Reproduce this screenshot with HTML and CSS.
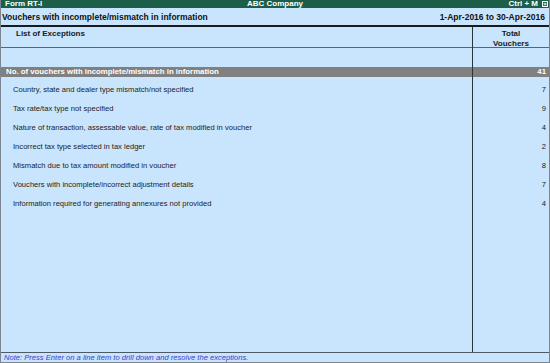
FILE: index.html
```html
<!DOCTYPE html>
<html>
<head>
  <title>Form RT-I</title>
  <link rel="stylesheet" href="styles.css">
</head>
<body>
  <div class="window">
    <div class="titlebar">
      <span class="title-left">Form RT-I</span>
      <span class="title-center">ABC Company</span>
      <span class="title-right">Ctrl + M <span class="close-box">&#215;</span></span>
    </div>

    <div class="header">
      <span class="report-name">Vouchers with incomplete/mismatch in information</span>
      <span class="period">1-Apr-2016 to 30-Apr-2016</span>
    </div>

    <div class="report">
      <div class="row col-head">
        <div class="cell-left">List of Exceptions</div>
        <div class="cell-right">Total<br>Vouchers</div>
      </div>
      <div class="row spacer">
        <div class="cell-left"></div>
        <div class="cell-right"></div>
      </div>
      <div class="row total-row">
        <div class="cell-left">No. of vouchers with incomplete/mismatch in information</div>
        <div class="cell-right">41</div>
      </div>
      <div class="row gap">
        <div class="cell-left"></div>
        <div class="cell-right"></div>
      </div>
      <div class="row item">
        <div class="cell-left">Country, state and dealer type mismatch/not specified</div>
        <div class="cell-right">7</div>
      </div>
      <div class="row item">
        <div class="cell-left">Tax rate/tax type not specified</div>
        <div class="cell-right">9</div>
      </div>
      <div class="row item">
        <div class="cell-left">Nature of transaction, assessable value, rate of tax modified in voucher</div>
        <div class="cell-right">4</div>
      </div>
      <div class="row item">
        <div class="cell-left">Incorrect tax type selected in tax ledger</div>
        <div class="cell-right">2</div>
      </div>
      <div class="row item">
        <div class="cell-left">Mismatch due to tax amount modified in voucher</div>
        <div class="cell-right">8</div>
      </div>
      <div class="row item">
        <div class="cell-left">Vouchers with incomplete/incorrect adjustment details</div>
        <div class="cell-right">7</div>
      </div>
      <div class="row item">
        <div class="cell-left">Information required for generating annexures not provided</div>
        <div class="cell-right">4</div>
      </div>
      <div class="row filler">
        <div class="cell-left"></div>
        <div class="cell-right"></div>
      </div>
    </div>

    <div class="note">Note: Press Enter on a line item to drill down and resolve the exceptions.</div>
  </div>
</body>
</html>
```

FILE: styles.css
```css
body {
  margin: 0;
  padding: 0;
  font-family: 'Liberation Sans', Arial, sans-serif;
  font-size: 8px;
  color: #1a1a1a;
  background-color: #ffffff;
}

.window {
  width: 550px;
  height: 363px;
  box-sizing: border-box;
  display: flex;
  flex-direction: column;
  background-color: #c9e5fd;
  border-left: 1px solid #7a8590;
  border-right: 1px solid #7a8590;
}

/* Title bar */
.titlebar {
  height: 8px;
  background-color: #1d5e49;
  color: #ffffff;
  font-weight: bold;
  line-height: 8px;
  display: flex;
  align-items: center;
  justify-content: space-between;
  padding: 0 1px 0 4px;
  position: relative;
}

.title-center {
  position: absolute;
  left: 0;
  right: 0;
  text-align: center;
  pointer-events: none;
}

.title-right {
  display: flex;
  align-items: center;
  gap: 4px;
}

.close-box {
  display: inline-block;
  width: 6px;
  height: 6px;
  border: 1px solid #ffffff;
  box-sizing: border-box;
  font-size: 6px;
  line-height: 4px;
  text-align: center;
}

/* Report header */
.header {
  height: 17px;
  display: flex;
  justify-content: space-between;
  align-items: center;
  padding: 0 4px 0 1px;
  font-weight: bold;
  font-size: 8.5px;
  color: #111111;
  border-bottom: 2px solid #1a1a1a;
}

/* Report grid */
.report {
  flex: 1;
  display: flex;
  flex-direction: column;
  border-bottom: 1px solid #4e5963;
}

.row {
  display: grid;
  grid-template-columns: 1fr 77px;
}

.cell-right {
  border-left: 1px solid #2e3338;
  text-align: right;
  padding-right: 3px;
}

.col-head {
  height: 20px;
  border-bottom: 1px solid #5a6570;
  font-weight: bold;
}

.col-head .cell-left {
  padding: 2px 0 0 15px;
}

.col-head .cell-right {
  text-align: center;
  padding: 2px 0 0 0;
  line-height: 10px;
}

.spacer {
  height: 19px;
}

.total-row {
  height: 10px;
  line-height: 10px;
  background-color: #808080;
  color: #ffffff;
  font-weight: bold;
  font-size: 7.8px;
}

.total-row .cell-left {
  padding-left: 5px;
}

.gap {
  height: 3px;
}

.item {
  height: 19px;
  line-height: 19px;
  color: #222222;
  font-size: 7.6px;
}

.item .cell-left {
  padding-left: 12px;
}

.filler {
  flex: 1;
}

/* Footer note */
.note {
  height: 9px;
  line-height: 9px;
  padding-left: 3px;
  font-style: italic;
  font-size: 7.6px;
  color: #3b3bd6;
  border-bottom: 1px solid #7a8590;
}
```
